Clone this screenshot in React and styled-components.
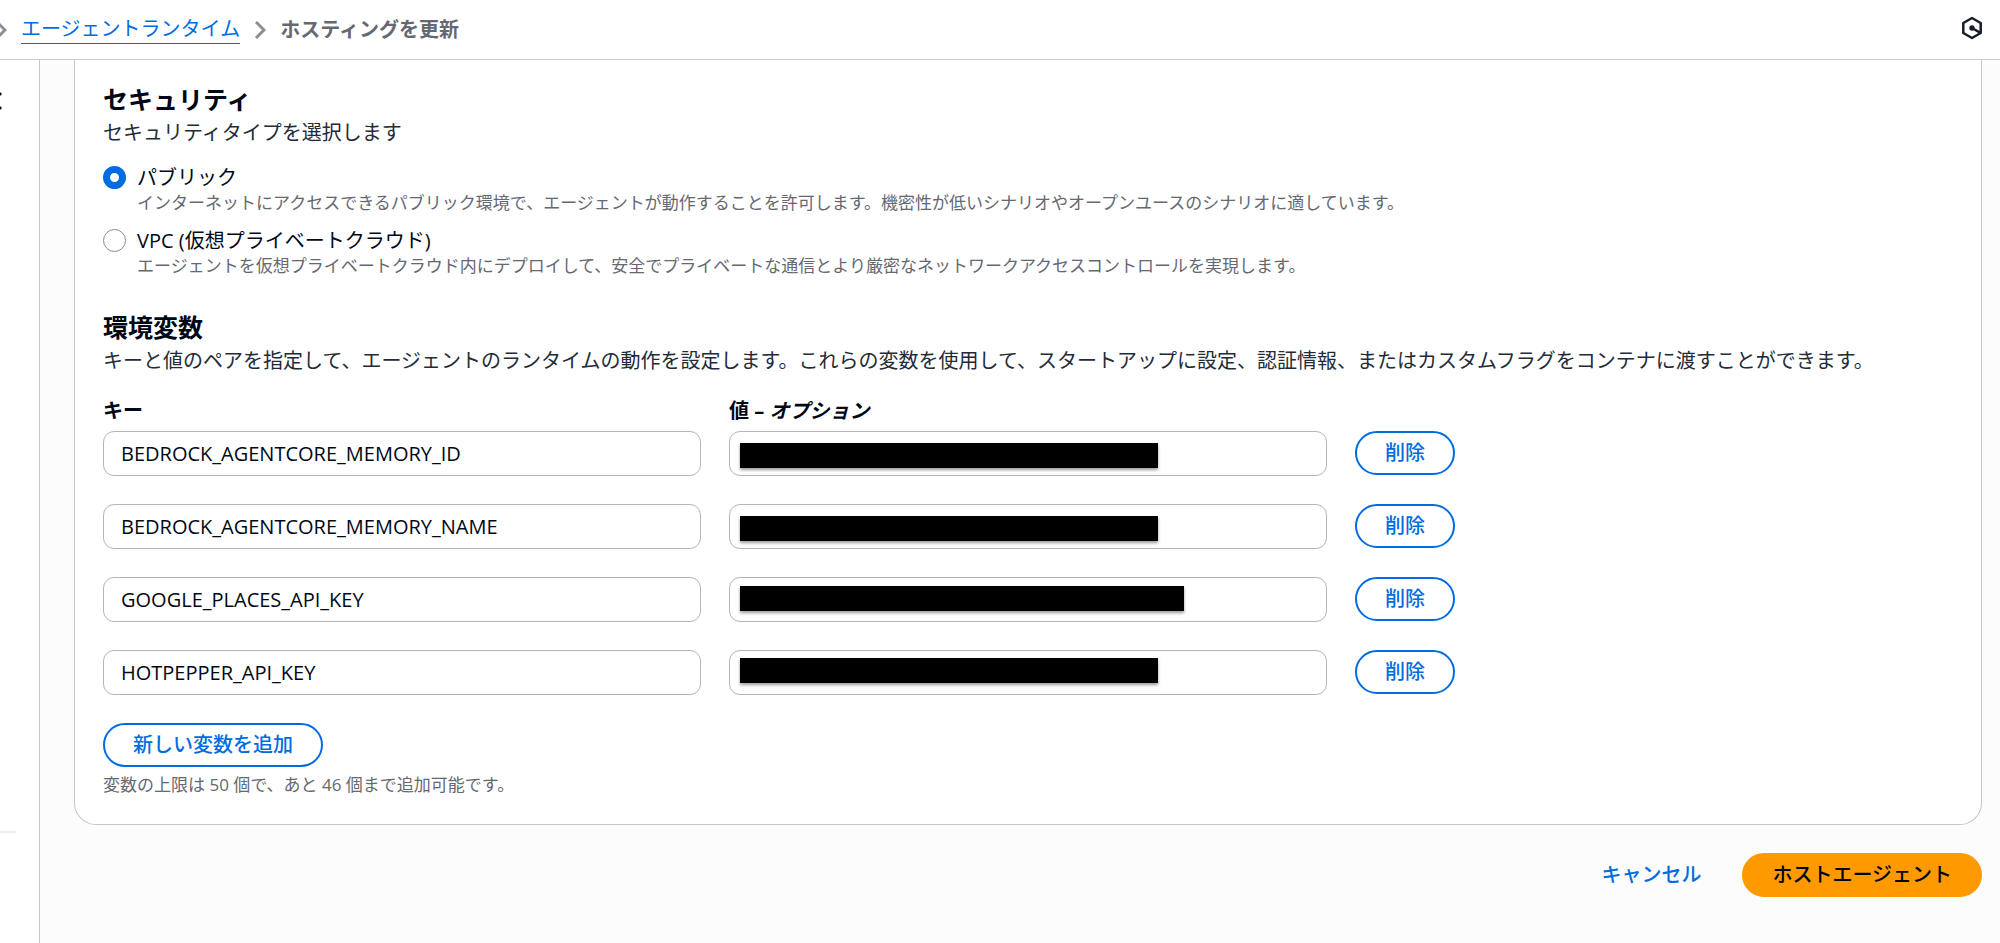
import React, { useState } from "react";
import styled, { createGlobalStyle, css } from "styled-components";

const variables = [
  { key: "BEDROCK_AGENTCORE_MEMORY_ID", mask: { top: 12, width: 418 } },
  { key: "BEDROCK_AGENTCORE_MEMORY_NAME", mask: { top: 12, width: 418 } },
  { key: "GOOGLE_PLACES_API_KEY", mask: { top: 9, width: 444 } },
  { key: "HOTPEPPER_API_KEY", mask: { top: 8, width: 418 } },
];

const securityTypes = [
  {
    id: "public",
    label: "パブリック",
    description:
      "インターネットにアクセスできるパブリック環境で、エージェントが動作することを許可します。機密性が低いシナリオやオープンユースのシナリオに適しています。",
  },
  {
    id: "vpc",
    label: "VPC (仮想プライベートクラウド)",
    description:
      "エージェントを仮想プライベートクラウド内にデプロイして、安全でプライベートな通信とより厳密なネットワークアクセスコントロールを実現します。",
  },
];

function Chevron() {
  return (
    <ChevronIcon viewBox="0 0 12 20" aria-hidden="true">
      <path d="M2 2l8 8-8 8" fill="none" stroke="#8c8c94" strokeWidth="3" />
    </ChevronIcon>
  );
}

function TopBar() {
  return (
    <Header>
      <Breadcrumbs aria-label="パンくずリスト">
        <Chevron />
        <CrumbLink href="#runtime">エージェントランタイム</CrumbLink>
        <Chevron />
        <CurrentCrumb aria-current="page">ホスティングを更新</CurrentCrumb>
      </Breadcrumbs>
      <IconButton type="button" aria-label="Amazon Q">
        <svg width="22" height="24" viewBox="0 0 22 24" fill="none" stroke="#161d2b">
          <path d="M11 2l8.700 5v10L11 22 2.300 17V7z" strokeWidth="2.500" strokeLinejoin="round" />
          <path d="M11 12l8 4.600" strokeWidth="2.500" />
          <circle cx="11" cy="12" r="2.700" fill="#161d2b" stroke="none" />
        </svg>
      </IconButton>
    </Header>
  );
}

function SidePanel() {
  return (
    <Side>
      <CloseButton type="button" aria-label="閉じる">
        <svg width="20" height="20" viewBox="0 0 20 20" fill="none" stroke="#0f141a" strokeWidth="3">
          <path d="M2 2l16 16M18 2L2 18" />
        </svg>
      </CloseButton>
      <SideDivider />
    </Side>
  );
}

function SecuritySection() {
  const [selected, setSelected] = useState("public");
  return (
    <section>
      <SectionTitle>セキュリティ</SectionTitle>
      <SectionText>セキュリティタイプを選択します</SectionText>
      <RadioList>
        {securityTypes.map((type) => (
          <RadioRow key={type.id} htmlFor={type.id}>
            <Radio
              type="radio"
              name="security"
              id={type.id}
              checked={selected === type.id}
              onChange={() => setSelected(type.id)}
            />
            <div>
              <RadioLabel>{type.label}</RadioLabel>
              <HelpText>{type.description}</HelpText>
            </div>
          </RadioRow>
        ))}
      </RadioList>
    </section>
  );
}

function VariablesSection() {
  return (
    <VariablesBlock>
      <SectionTitle>環境変数</SectionTitle>
      <SectionText>
        キーと値のペアを指定して、エージェントのランタイムの動作を設定します。これらの変数を使用して、スタートアップに設定、認証情報、またはカスタムフラグをコンテナに渡すことができます。
      </SectionText>
      <ColumnLabels>
        <FieldLabel htmlFor="key-0">キー</FieldLabel>
        <FieldLabel htmlFor="value-0">
          値 – <i>オプション</i>
        </FieldLabel>
      </ColumnLabels>
      <Rows>
        {variables.map((item, i) => (
          <Row key={item.key}>
            <TextInput id={`key-${i}`} aria-label="キー" defaultValue={item.key} />
            <ValueField>
              <TextInput id={`value-${i}`} aria-label="値" />
              <Mask $top={item.mask.top} $width={item.mask.width} />
            </ValueField>
            <div>
              <Button type="button">削除</Button>
            </div>
          </Row>
        ))}
      </Rows>
      <Button type="button">新しい変数を追加</Button>
      <LimitNote>変数の上限は 50 個で、あと 46 個まで追加可能です。</LimitNote>
    </VariablesBlock>
  );
}

export default function App() {
  return (
    <>
      <GlobalStyle />
      <Page>
        <TopBar />
        <Body>
          <SidePanel />
          <Main>
            <Card>
              <SecuritySection />
              <VariablesSection />
            </Card>
            <Actions>
              <Button type="button" $variant="link">キャンセル</Button>
              <Button type="button" $variant="primary">ホストエージェント</Button>
            </Actions>
          </Main>
        </Body>
      </Page>
    </>
  );
}

const GlobalStyle = createGlobalStyle`
  * {
    box-sizing: border-box;
  }

  body {
    margin: 0;
    background: #fff;
    color: #000716;
    font-family: "Open Sans", "Noto Sans CJK JP", sans-serif;
    font-size: 20px;
    line-height: 28px;
  }

  button, input {
    font: inherit;
  }
`;

const Page = styled.div`
  display: flex;
  flex-direction: column;
  min-height: 100vh;
`;

const Header = styled.header`
  display: flex;
  align-items: center;
  justify-content: space-between;
  height: 60px;
  padding-right: 17px;
  border-bottom: 1px solid #c6c6cd;
`;

const Breadcrumbs = styled.nav`
  display: flex;
  align-items: center;
  gap: 14px;
  margin-left: -5px;
`;

const ChevronIcon = styled.svg`
  flex: none;
  width: 12px;
  height: 20px;
`;

const CrumbLink = styled.a`
  color: #006ce0;
  text-decoration: none;
  border-bottom: 1px solid #006ce0;
`;

const CurrentCrumb = styled.span`
  color: #656871;
  font-weight: 700;
`;

const IconButton = styled.button`
  display: flex;
  padding: 0 0 4px;
  border: 0;
  background: none;
`;

const Body = styled.div`
  display: flex;
  flex: 1;
`;

const Side = styled.aside`
  flex: none;
  width: 40px;
  border-right: 1px solid #c6c6cd;
  overflow: hidden;
`;

const CloseButton = styled.button`
  display: flex;
  margin: 31px 0 0 -17px;
  padding: 0;
  border: 0;
  background: none;
`;

const SideDivider = styled.hr`
  width: 16px;
  height: 2px;
  margin: 720px 0 0;
  border: 0;
  background: #ebebf0;
`;

const Main = styled.main`
  flex: 1;
  min-width: 0;
  padding: 0 18px 45px 34px;
  background: #fcfcfd;
`;

const Card = styled.div`
  padding: 22px 28px;
  padding-bottom: 28px;
  border: 1px solid #c6c6cd;
  border-top: 0;
  border-radius: 0 0 22px 22px;
  background: #fff;
`;

const SectionTitle = styled.h2`
  margin: 0 0 3px;
  font-size: 25px;
  line-height: 34px;
  font-weight: 700;
`;

const SectionText = styled.p`
  margin: 0;
  color: #232b37;
`;

const RadioList = styled.div`
  display: flex;
  flex-direction: column;
  gap: 13px;
  margin-top: 17px;
`;

const RadioRow = styled.label`
  display: flex;
  gap: 11px;
`;

const Radio = styled.input`
  appearance: none;
  flex: none;
  width: 23px;
  height: 23px;
  margin: 2px 0 0;
  border: 1px solid #8c8c94;
  border-radius: 50%;
  background: #fff;

  &:checked {
    border: 7px solid #006ce0;
  }
`;

const RadioLabel = styled.div`
  line-height: 27px;
`;

const HelpText = styled.div`
  color: #656871;
  font-size: 17px;
  line-height: 23px;
`;

const LimitNote = styled(HelpText)`
  margin-top: 6px;
`;

const VariablesBlock = styled.section`
  margin-top: 33px;
`;

const columns = css`
  display: grid;
  grid-template-columns: repeat(3, minmax(0, 1fr));
  column-gap: 28px;
`;

const ColumnLabels = styled.div`
  ${columns}
  margin-top: 22px;
  padding-bottom: 6px;
`;

const FieldLabel = styled.label`
  font-weight: 700;
`;

const Rows = styled.div`
  display: flex;
  flex-direction: column;
  gap: 28px;
  margin-bottom: 28px;
`;

const Row = styled.div`
  ${columns}
`;

const TextInput = styled.input`
  display: block;
  width: 100%;
  height: 45px;
  padding: 0 17px;
  border: 1px solid #b4b4bb;
  border-radius: 11px;
  background: #fff;
  color: #000716;
`;

const ValueField = styled.div`
  position: relative;
`;

// Covers the secret value inside its field.
const Mask = styled.div`
  position: absolute;
  top: ${({ $top }) => $top}px;
  left: 11px;
  width: ${({ $width }) => $width}px;
  height: 25px;
  background: #000;
  box-shadow: 0 2px 3px rgba(0, 0, 0, 0.4);
`;

const Button = styled.button`
  display: block;
  height: 44px;
  padding: 0 28px;
  border: 2px solid #006ce0;
  border-radius: 22px;
  background: #fff;
  color: #006ce0;
  font-weight: 500;
  line-height: 28px;

  ${({ $variant }) =>
    $variant === "link" &&
    css`
      border-color: transparent;
      background: transparent;
    `}

  ${({ $variant }) =>
    $variant === "primary" &&
    css`
      border-color: #ff9900;
      background: #ff9900;
      color: #000716;
    `}
`;

const Actions = styled.div`
  display: flex;
  justify-content: flex-end;
  gap: 11px;
  margin-top: 28px;
`;
